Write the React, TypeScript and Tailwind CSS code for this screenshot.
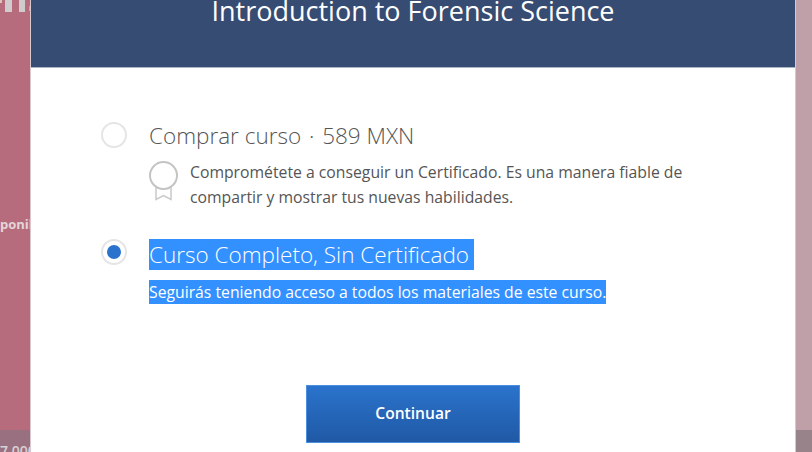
import React from "react";

/* ---------- Small drawings ---------- */

function CertIcon() {
  return (
    <svg width="30" height="40" viewBox="0 0 30 40" fill="none" className="mt-[1px] shrink-0">
      <path d="M7 26 V38.5 L14.5 34.5 L22 38.5 V26" stroke="#c9c9c9" strokeWidth="1.5" />
      <circle cx="14.5" cy="14.5" r="13.5" fill="#fff" stroke="#c4c4c4" strokeWidth="2" />
    </svg>
  );
}

function Radio({ checked = false }: { checked?: boolean }) {
  return (
    <span className="flex h-[26px] w-[26px] shrink-0 items-center justify-center rounded-full border-2 border-[#e5e5e5] bg-white">
      {checked && <span className="h-[14px] w-[14px] rounded-full bg-[#2a73cc]" />}
    </span>
  );
}

/* ---------- Page behind the modal ---------- */

function LeftEdge() {
  return (
    <div className="flex w-[30px] shrink-0 flex-col overflow-hidden bg-[#b76c7e]">
      <div className="flex h-[12px] items-start">
        <span className="h-[3px] w-[2px] bg-[#d8c4b8]" />
        <span className="ml-[3px] h-[12px] w-[7px] bg-[#d0cccd]" />
        <span className="ml-[7px] h-[12px] w-[6px] bg-[#d0cccd]" />
        <span className="mt-[6px] ml-[4px] h-[5px] w-[1px] bg-[#c9a5b0]" />
      </div>
      <div className="mt-[203px] h-[18px] whitespace-nowrap text-[13px] font-bold leading-[18px] text-[#e3d6d9]">
        ponible
      </div>
      <div className="mt-[197px] h-[22px] overflow-hidden whitespace-nowrap bg-[#99707f] pt-[12px] text-[14px] font-semibold leading-[18px] text-[#d8d0d3]">
        7.000
      </div>
    </div>
  );
}

function RightEdge() {
  return (
    <div className="flex min-w-0 flex-1 flex-col bg-[#bfa0a8]">
      <div className="flex-1" />
      <div className="h-[22px] bg-[#99838b]" />
    </div>
  );
}

/* ---------- Modal ---------- */

export default function App() {
  return (
    <div className="flex h-[452px] w-[812px] overflow-hidden font-['Open_Sans',sans-serif]">
      <LeftEdge />
      <div className="flex w-[766px] shrink-0 flex-col border-x border-[#d8c8cd] bg-white">
        <div className="flex h-[68px] shrink-0 justify-center border-b-[1px] border-[#a9b4c6] bg-[#374c73]">
          <h1 className="mt-[-9px] text-[27px] leading-[40px] font-normal text-white">
            Introduction to Forensic Science
          </h1>
        </div>

        <div className="flex flex-1 flex-col pl-[70px]">
          <div className="mt-[54px] flex gap-[22px]">
            <Radio />
            <div className="flex flex-col">
              <div className="text-[22.5px] leading-[28px] font-light text-[#555]">
                Comprar curso<span className="mx-[2px]"> · </span>589 MXN
              </div>
              <div className="mt-[10px] flex gap-[11px]">
                <CertIcon />
                <p className="w-[520px] text-[15.75px] leading-[25px] text-[#555]">
                  Comprométete a conseguir un Certificado. Es una manera fiable de compartir y mostrar tus nuevas habilidades.
                </p>
              </div>
            </div>
          </div>

          <div className="mt-[29px] flex gap-[22px]">
            <Radio checked />
            <div className="flex flex-col items-start">
              <div className="h-[31px] bg-[#3390ff] pr-[5px] text-[22.5px] leading-[31px] font-light text-white">
                Curso Completo, Sin Certificado
              </div>
              <div className="mt-[10px] h-[24px] bg-[#3390ff] text-[15.75px] leading-[24px] font-medium text-white">
                Seguirás teniendo acceso a todos los materiales de este curso.
              </div>
            </div>
          </div>

          <div className="mt-[81px] ml-[205px]">
            <button className="h-[58px] w-[214px] border border-[#4a8fe0] bg-gradient-to-b from-[#2a73cc] to-[#2059a5] text-[15.6px] font-semibold text-white">
              Continuar
            </button>
          </div>
        </div>
      </div>
      <RightEdge />
    </div>
  );
}
